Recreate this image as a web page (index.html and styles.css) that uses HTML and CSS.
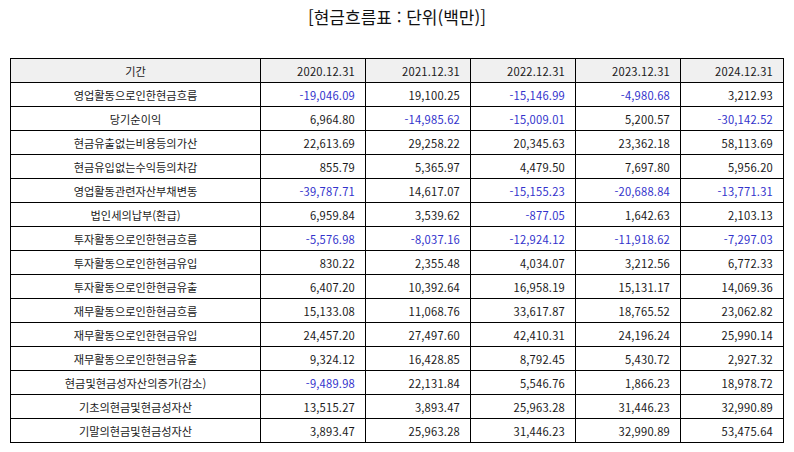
FILE: index.html
```html
<!DOCTYPE html>
<html lang="ko">
<head>
<meta charset="utf-8">
<link rel="stylesheet" href="styles.css">
</head>
<body>
<div class="page">
  <h1 class="title">[현금흐름표 : 단위(백만)]</h1>
  <table class="cf">
    <colgroup>
      <col class="c-label"><col class="c-num"><col class="c-num"><col class="c-num"><col class="c-num"><col class="c-last">
    </colgroup>
    <thead>
      <tr><th class="lbl">기간</th><th>2020.12.31</th><th>2021.12.31</th><th>2022.12.31</th><th>2023.12.31</th><th>2024.12.31</th></tr>
    </thead>
    <tbody>
      <tr><td class="lbl">영업활동으로인한현금흐름</td><td class="neg">-19,046.09</td><td>19,100.25</td><td class="neg">-15,146.99</td><td class="neg">-4,980.68</td><td>3,212.93</td></tr>
      <tr><td class="lbl">당기순이익</td><td>6,964.80</td><td class="neg">-14,985.62</td><td class="neg">-15,009.01</td><td>5,200.57</td><td class="neg">-30,142.52</td></tr>
      <tr><td class="lbl">현금유출없는비용등의가산</td><td>22,613.69</td><td>29,258.22</td><td>20,345.63</td><td>23,362.18</td><td>58,113.69</td></tr>
      <tr><td class="lbl">현금유입없는수익등의차감</td><td>855.79</td><td>5,365.97</td><td>4,479.50</td><td>7,697.80</td><td>5,956.20</td></tr>
      <tr><td class="lbl">영업활동관련자산부채변동</td><td class="neg">-39,787.71</td><td>14,617.07</td><td class="neg">-15,155.23</td><td class="neg">-20,688.84</td><td class="neg">-13,771.31</td></tr>
      <tr><td class="lbl">법인세의납부(환급)</td><td>6,959.84</td><td>3,539.62</td><td class="neg">-877.05</td><td>1,642.63</td><td>2,103.13</td></tr>
      <tr><td class="lbl">투자활동으로인한현금흐름</td><td class="neg">-5,576.98</td><td class="neg">-8,037.16</td><td class="neg">-12,924.12</td><td class="neg">-11,918.62</td><td class="neg">-7,297.03</td></tr>
      <tr><td class="lbl">투자활동으로인한현금유입</td><td>830.22</td><td>2,355.48</td><td>4,034.07</td><td>3,212.56</td><td>6,772.33</td></tr>
      <tr><td class="lbl">투자활동으로인한현금유출</td><td>6,407.20</td><td>10,392.64</td><td>16,958.19</td><td>15,131.17</td><td>14,069.36</td></tr>
      <tr><td class="lbl">재무활동으로인한현금흐름</td><td>15,133.08</td><td>11,068.76</td><td>33,617.87</td><td>18,765.52</td><td>23,062.82</td></tr>
      <tr><td class="lbl">재무활동으로인한현금유입</td><td>24,457.20</td><td>27,497.60</td><td>42,410.31</td><td>24,196.24</td><td>25,990.14</td></tr>
      <tr><td class="lbl">재무활동으로인한현금유출</td><td>9,324.12</td><td>16,428.85</td><td>8,792.45</td><td>5,430.72</td><td>2,927.32</td></tr>
      <tr><td class="lbl">현금및현금성자산의증가(감소)</td><td class="neg">-9,489.98</td><td>22,131.84</td><td>5,546.76</td><td>1,866.23</td><td>18,978.72</td></tr>
      <tr><td class="lbl">기초의현금및현금성자산</td><td>13,515.27</td><td>3,893.47</td><td>25,963.28</td><td>31,446.23</td><td>32,990.89</td></tr>
      <tr><td class="lbl">기말의현금및현금성자산</td><td>3,893.47</td><td>25,963.28</td><td>31,446.23</td><td>32,990.89</td><td>53,475.64</td></tr>
    </tbody>
  </table>
</div>
</body>
</html>
```

FILE: styles.css
```css
html, body {
  margin: 0;
  padding: 0;
  background: #ffffff;
}
body {
  font-family: "Noto Sans CJK KR", "Noto Sans", sans-serif;
  color: #1a1a1a;
}
.page {
  width: 794px;
  height: 452px;
  padding: 6px 0 0 10px;
  box-sizing: border-box;
}
.title {
  margin: 0 0 0 -10px;
  width: 794px;
  text-align: center;
  font-size: 17px;
  font-weight: 400;
  line-height: 22px;
  color: #111111;
}
.cf {
  margin-top: 30px;
  border-collapse: collapse;
  table-layout: fixed;
  width: 773px;
  font-size: 11.2px;
}
.c-label { width: 250px; }
.c-num { width: 105px; }
.c-last { width: 103px; }
.cf th, .cf td {
  border: 1px solid #000000;
  height: 23px;
  padding: 0 10px 0 4px;
  text-align: right;
  font-weight: 400;
  white-space: nowrap;
  line-height: 14px;
  letter-spacing: 0.2px;
}
.cf thead th {
  background: #f0f0f0;
}
.cf .lbl {
  text-align: center;
  padding: 0 4px;
  letter-spacing: 0;
}
.cf .neg {
  color: #3333cc;
}
```
